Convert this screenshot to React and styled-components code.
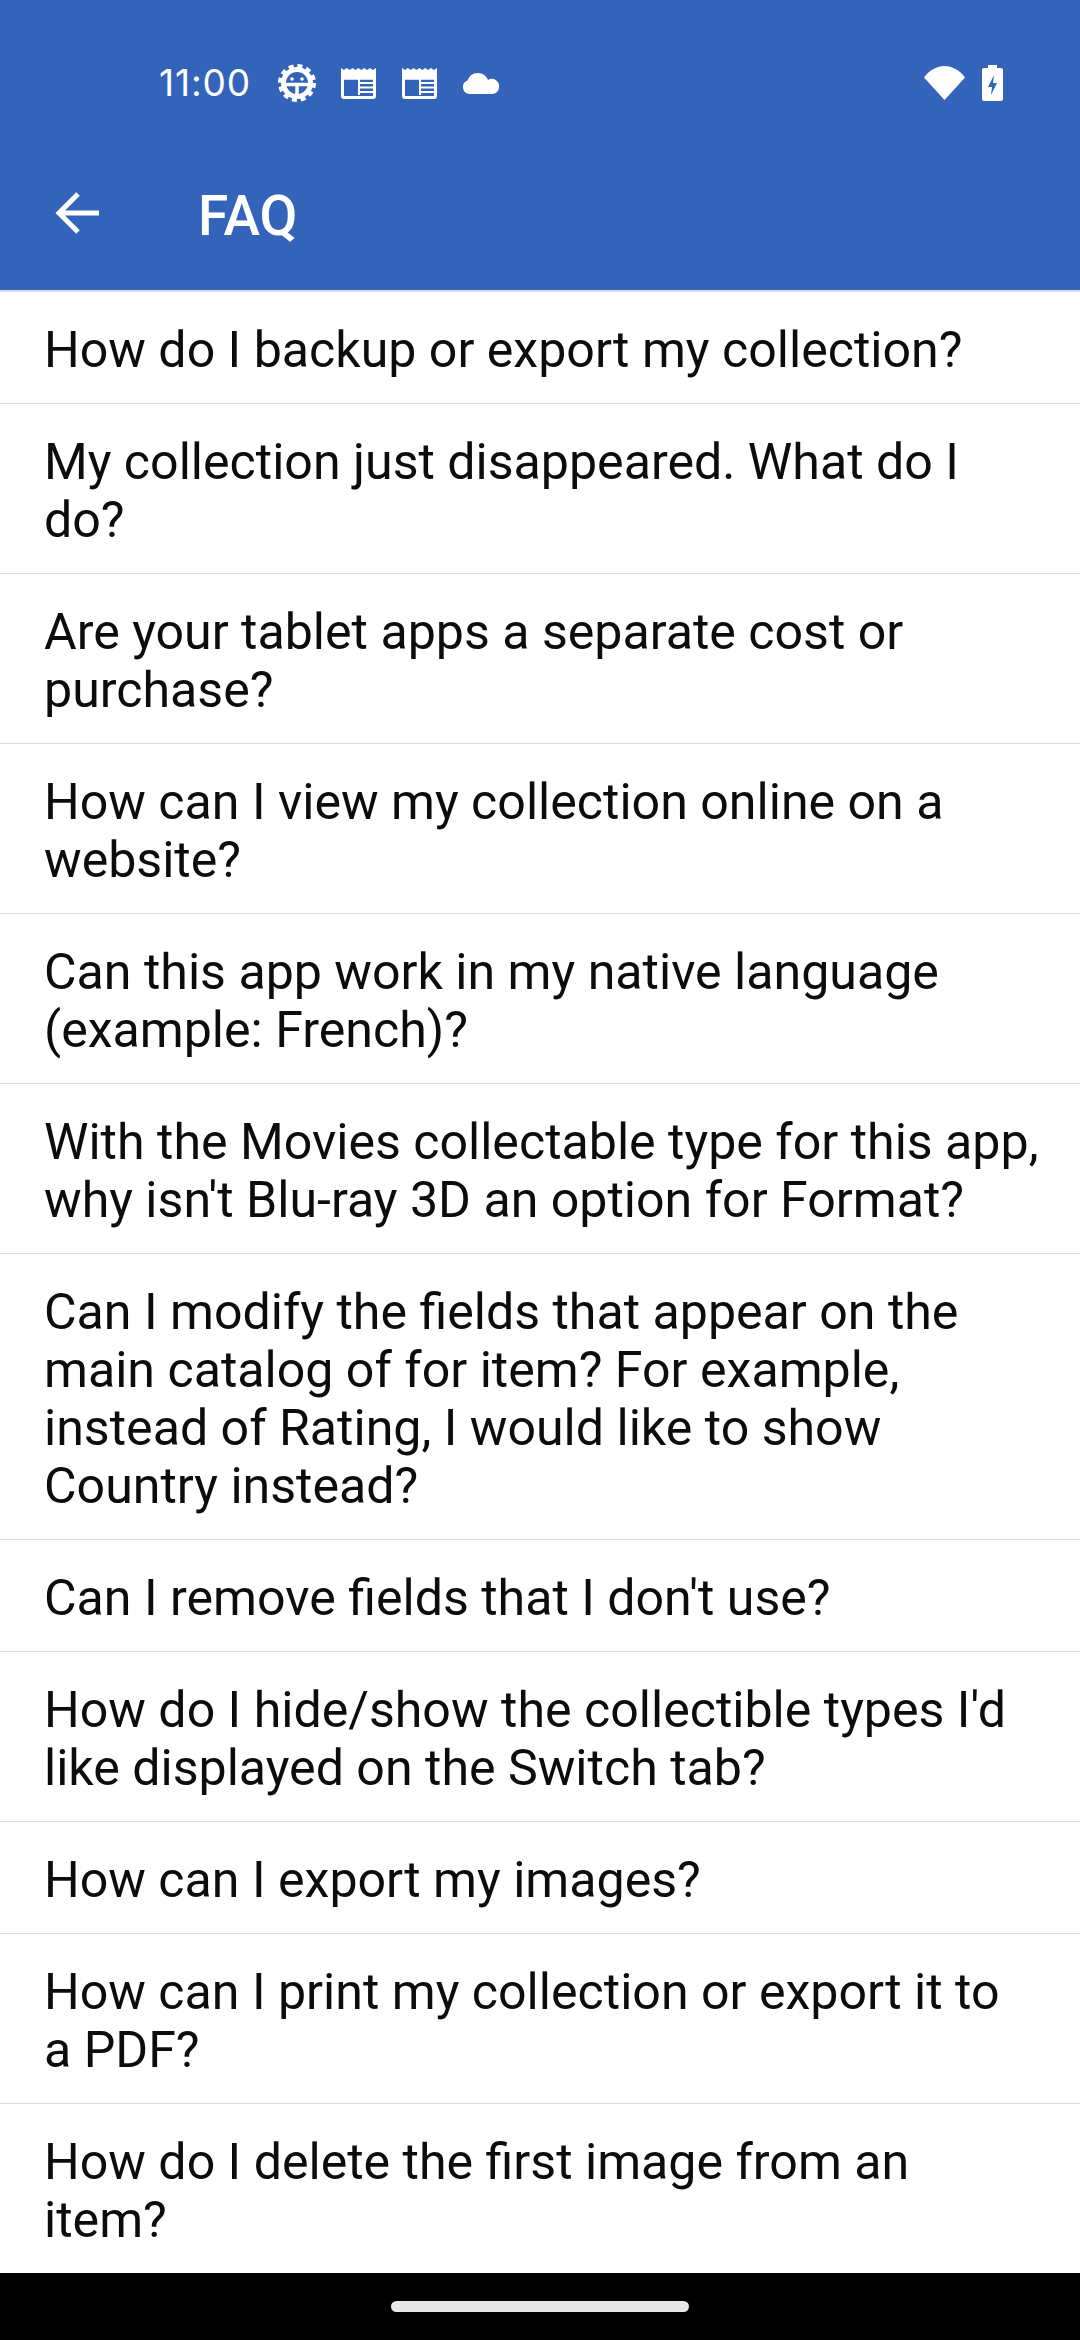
import React from "react";
import styled, { createGlobalStyle } from "styled-components";

const Global = createGlobalStyle`
  html, body { margin: 0; padding: 0; background: #fff; }
  #root { width: 1080px; height: 2340px; }
`;
const Screen = styled.div`
  width: 1080px; height: 2340px; display: flex; flex-direction: column;
  overflow: hidden; font-family: Roboto, sans-serif; background: #fff;
`;
const Header = styled.header`
  height: 290px; flex: none; background: #3364b9; color: #fff;
  display: flex; flex-direction: column; box-sizing: border-box;
`;
const StatusBar = styled.div`
  height: 166px; display: flex; align-items: center; justify-content: space-between;
  padding: 0 77px 0 159px; box-sizing: border-box;
`;
const StatusGroup = styled.div`display: flex; align-items: center;`;
const Clock = styled.span`
  font-size: 37px; font-family: Inter, Roboto, sans-serif; margin-right: 27px; letter-spacing: 0.9px;
  padding-bottom: 2px;
`;
const Toolbar = styled.div`
  height: 124px; display: flex; align-items: center; padding: 0 0 30px 55px; box-sizing: border-box;
`;
const Title = styled.h1`
  margin: 6px 0 0 99px; font-size: 55px; font-weight: 500; line-height: 60px;
`;
const List = styled.main`
  flex: 1; min-height: 0; display: flex; flex-direction: column; border-top: 2px solid #d8dbe8;
`;
const Row = styled.div`
  padding: 29px 36px 24px 44px; border-bottom: 1px solid #dcdcdc;
  font-size: 50.1px; line-height: 58px; color: #0c0c0c;
  &:last-child { border-bottom: none; }
`;
const NavBar = styled.footer`
  height: 67px; flex: none; background: #000; display: flex; align-items: center; justify-content: center;
`;
const Pill = styled.div`width: 298px; height: 11px; border-radius: 6px; background: #e8e8e8;`;

const IconGear = () => (
  <svg width="38" height="38" viewBox="0 0 38 38" style={{marginRight: 25}}>
    <circle cx="19" cy="19" r="13.500" fill="none" stroke="#fff" strokeWidth="5" />
    <circle cx="19" cy="19" r="17" fill="none" stroke="#fff" strokeWidth="4" strokeDasharray="4.900 4" />
    <path d="M6 20.500h26M19 20.500v12" stroke="#fff" strokeWidth="3.500" fill="none" />
    <circle cx="14" cy="15" r="1.800" fill="#fff" />
    <circle cx="24" cy="15" r="1.800" fill="#fff" />
  </svg>
);
const IconNews = ({ last }) => (
  <svg width="35" height="31" viewBox="0 0 35 31" style={{marginRight: last ? 0 : 26}}>
    <path d="M0 0l2.900 2 2.900-2 2.900 2 2.900-2 2.900 2 2.900-2 2.900 2 2.900-2 2.900 2 2.900-2 2.900 2L35 0v28a3 3 0 0 1-3 3H3a3 3 0 0 1-3-3z" fill="#fff" />
    <rect x="3" y="10" width="29" height="18" fill="#3364b9" />
    <path d="M18 11v16" stroke="#fff" strokeWidth="2" />
    <path d="M18 15h14M18 19.500h14M18 24h14" stroke="#fff" strokeWidth="2" />
    <path d="M3 10.500h29" stroke="#fff" strokeWidth="2.500" />
  </svg>
);
const IconCloud = () => (
  <svg width="38" height="21" viewBox="0 0 38 21" style={{marginLeft: 24}}>
    <path d="M8 21a7 7 0 0 1-1.500-13.500A11 11 0 0 1 17 0c4.800 0 8.600 3 10 7A7.200 7.200 0 0 1 38 14c0 4-3 7-7 7z" fill="#fff" />
  </svg>
);
const IconWifi = () => (
  <svg width="41" height="34" viewBox="0 0 41 34" style={{marginRight: 17}}>
    <path d="M0 11.500C5.500 4 13 0 20.500 0S35.500 4 41 11.500L20.500 34z" fill="#fff" />
  </svg>
);
const IconBattery = () => (
  <svg width="21" height="36" viewBox="0 0 21 36">
    <path d="M6 3V0h9v3h4a2 2 0 0 1 2 2v29a2 2 0 0 1-2 2H2a2 2 0 0 1-2-2V5a2 2 0 0 1 2-2z" fill="#fff" />
    <path d="M12 10l-6 12h4l-1 8 6-12h-4z" fill="#3364b9" />
  </svg>
);
const IconBack = () => (
  <svg width="44" height="42" viewBox="0 0 44 42">
    <path d="M44 21H5M23 2L4 21 23 40" fill="none" stroke="#fff" strokeWidth="5" />
  </svg>
);

const questions = [
  "How do I backup or export my collection?",
  "My collection just disappeared. What do I do?",
  "Are your tablet apps a separate cost or purchase?",
  "How can I view my collection online on a website?",
  "Can this app work in my native language (example: French)?",
  "With the Movies collectable type for this app, why isn't Blu-ray 3D an option for Format?",
  "Can I modify the fields that appear on the main catalog of for item? For example, instead of Rating, I would like to show Country instead?",
  "Can I remove fields that I don't use?",
  "How do I hide/show the collectible types I'd like displayed on the Switch tab?",
  "How can I export my images?",
  "How can I print my collection or export it to a\u00A0PDF?",
  "How do I delete the first image from an item?",
];

export default function App() {
  return (
    <Screen>
      <Global />
      <Header>
        <StatusBar>
          <StatusGroup>
            <Clock>11:00</Clock>
            <IconGear />
            <IconNews />
            <IconNews last />
            <IconCloud />
          </StatusGroup>
          <StatusGroup>
            <IconWifi />
            <IconBattery />
          </StatusGroup>
        </StatusBar>
        <Toolbar>
          <IconBack />
          <Title>FAQ</Title>
        </Toolbar>
      </Header>
      <List>
        {questions.map((q) => <Row key={q}>{q}</Row>)}
      </List>
      <NavBar><Pill /></NavBar>
    </Screen>
  );
}
